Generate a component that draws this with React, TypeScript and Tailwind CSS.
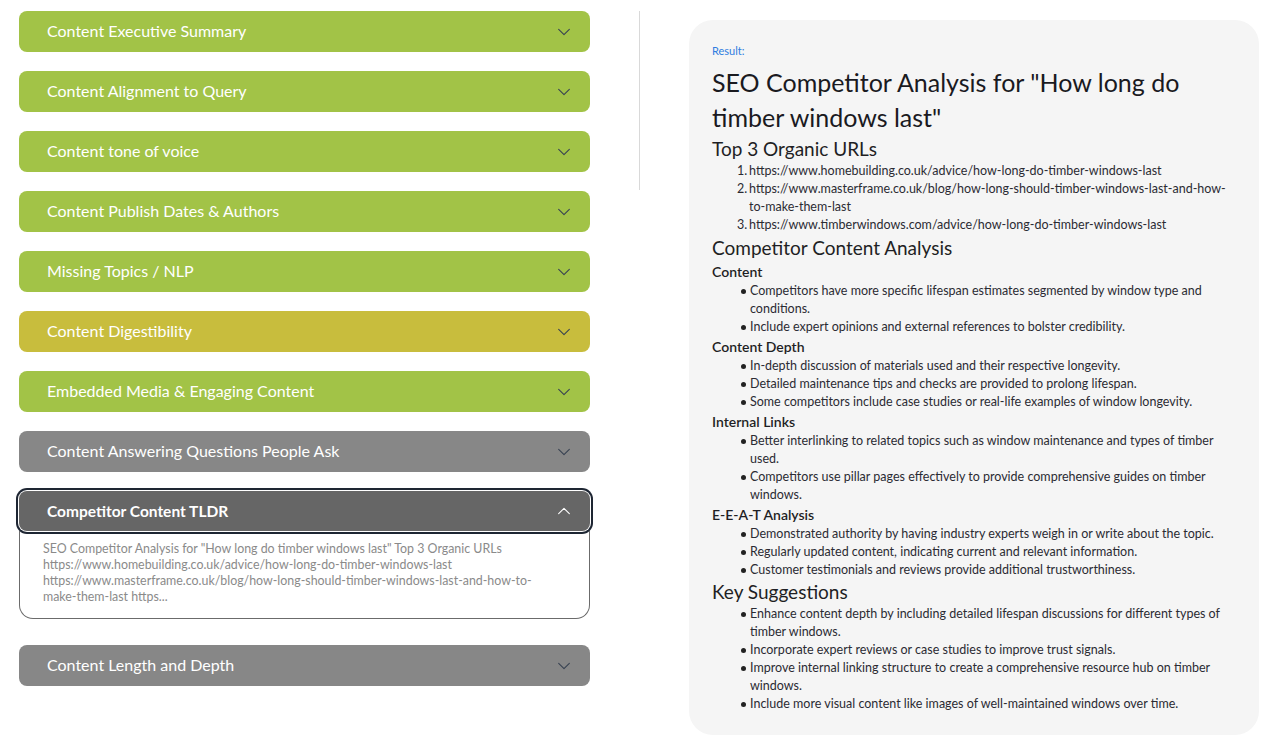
import React from "react";

const font = { fontFamily: "Lato, 'Noto Sans', sans-serif" };

function Chevron({ up, light }: { up?: boolean; light?: boolean }) {
  return (
    <svg width="16" height="16" viewBox="0 0 24 24" fill="none" stroke={light ? "#ffffff" : "#374151"} strokeWidth="1.6" strokeLinecap="round" strokeLinejoin="round">
      {up ? <path d="M4 16l8-8 8 8" /> : <path d="M4 8l8 8 8-8" />}
    </svg>
  );
}

const items: { t: string; c: string }[] = [
  { t: "Content Executive Summary", c: "bg-[#a2c347]" },
  { t: "Content Alignment to Query", c: "bg-[#a2c347]" },
  { t: "Content tone of voice", c: "bg-[#a2c347]" },
  { t: "Content Publish Dates & Authors", c: "bg-[#a2c347]" },
  { t: "Missing Topics / NLP", c: "bg-[#a2c347]" },
  { t: "Content Digestibility", c: "bg-[#c8bd3d]" },
  { t: "Embedded Media & Engaging Content", c: "bg-[#a2c347]" },
  { t: "Content Answering Questions People Ask", c: "bg-[#878787]" },
];

function Header({ t, c }: { t: string; c: string }) {
  return (
    <div className={`${c} h-[41px] rounded-[8px] flex items-center justify-between pl-[28px] pr-[18px]`}>
      <span className="text-white text-[16px] leading-[20px] pb-[2px]">{t}</span>
      <Chevron />
    </div>
  );
}

function Bullets({ items }: { items: string[] }) {
  return (
    <ul className="pl-[29px]">
      {items.map((s, i) => (
        <li key={i} className="flex text-[12.5px] leading-[18px] text-[#2b2b33]">
          <span className="w-[9px] shrink-0 flex pt-[6.5px]"><span className="w-[5px] h-[5px] rounded-full bg-[#222]" /></span>
          <span>{s}</span>
        </li>
      ))}
    </ul>
  );
}

export default function App() {
  return (
    <div className="w-[1279px] h-[737px] bg-white flex overflow-hidden" style={font}>
      <div className="w-[571px] ml-[19px] pt-[11px] flex flex-col">
        {items.map((it, i) => (
          <div key={i} className="mb-[19px]">
            <Header t={it.t} c={it.c} />
          </div>
        ))}
        <div className="mb-[26px]">
          <div className="bg-[#666666] h-[40px] rounded-[8px] flex items-center justify-between pl-[28px] pr-[18px] ring-2 ring-[#1e2633] ring-offset-1">
            <span className="text-white text-[15.5px] leading-[20px] pb-[1px] font-bold">Competitor Content TLDR</span>
            <Chevron up light />
          </div>
          <div className="border border-[#6b6b6b] border-t-0 rounded-b-[14px] pl-[23px] pr-[32px] pt-[10px] pb-[13px] text-[12.4px] leading-[16px] text-[#8a8a8a]">
            SEO Competitor Analysis for "How long do timber windows last" Top 3 Organic URLs https://www.homebuilding.co.uk/advice/how-long-do-timber-windows-last https://www.masterframe.co.uk/blog/how-long-should-timber-windows-last-and-how-to-make-them-last https...
          </div>
        </div>
        <Header t="Content Length and Depth" c="bg-[#878787]" />
      </div>
      <div className="w-[1px] h-[179px] bg-[#d9d9d9] mt-[11px] ml-[49px]" />
      <div className="ml-[49px] mt-[20px] w-[570px] h-[715px] bg-[#f5f5f5] rounded-[24px] pl-[23px] pr-[20px] pt-[24px] text-[#1f1f24]">
        <div className="text-[11px] text-[#2f7de0] leading-[14px]">Result:</div>
        <h1 className="text-[25px] leading-[35px] mt-[7px] text-[#1a1a1f]">SEO Competitor Analysis for "How long do timber windows last"</h1>
        <h2 className="text-[19px] leading-[27px]">Top 3 Organic URLs</h2>
        <ol className="pl-[25px] text-[12.5px] leading-[18px] text-[#2b2b33]">
          <li className="flex"><span className="w-[12px] shrink-0">1.</span><span>https://www.homebuilding.co.uk/advice/how-long-do-timber-windows-last</span></li>
          <li className="flex"><span className="w-[12px] shrink-0">2.</span><span>https://www.masterframe.co.uk/blog/how-long-should-timber-windows-last-and-how-to-make-them-last</span></li>
          <li className="flex"><span className="w-[12px] shrink-0">3.</span><span>https://www.timberwindows.com/advice/how-long-do-timber-windows-last</span></li>
        </ol>
        <h2 className="text-[19px] leading-[27px]">Competitor Content Analysis</h2>
        <h3 className="text-[14px] leading-[21px] font-semibold">Content</h3>
        <Bullets items={["Competitors have more specific lifespan estimates segmented by window type and conditions.", "Include expert opinions and external references to bolster credibility."]} />
        <h3 className="text-[14px] leading-[21px] font-semibold">Content Depth</h3>
        <Bullets items={["In-depth discussion of materials used and their respective longevity.", "Detailed maintenance tips and checks are provided to prolong lifespan.", "Some competitors include case studies or real-life examples of window longevity."]} />
        <h3 className="text-[14px] leading-[21px] font-semibold">Internal Links</h3>
        <Bullets items={["Better interlinking to related topics such as window maintenance and types of timber used.", "Competitors use pillar pages effectively to provide comprehensive guides on timber windows."]} />
        <h3 className="text-[14px] leading-[21px] font-semibold">E-E-A-T Analysis</h3>
        <Bullets items={["Demonstrated authority by having industry experts weigh in or write about the topic.", "Regularly updated content, indicating current and relevant information.", "Customer testimonials and reviews provide additional trustworthiness."]} />
        <h2 className="text-[19px] leading-[26px]">Key Suggestions</h2>
        <Bullets items={["Enhance content depth by including detailed lifespan discussions for different types of timber windows.", "Incorporate expert reviews or case studies to improve trust signals.", "Improve internal linking structure to create a comprehensive resource hub on timber windows.", "Include more visual content like images of well-maintained windows over time."]} />
      </div>
    </div>
  );
}
